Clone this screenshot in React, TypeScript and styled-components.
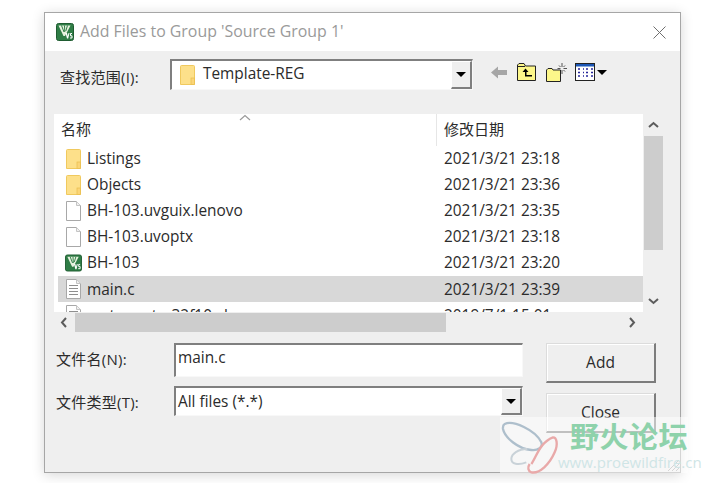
import styled, { createGlobalStyle } from "styled-components"

const GlobalStyle = createGlobalStyle`
    html, body {
        margin: 0;
        padding: 0;
        background: #fff;
    }
    * {
        box-sizing: border-box;
    }
`
const Page = styled.div`
    position: relative;
    width: 711px;
    height: 483px;
    padding: 12px 0 0 44px;
    overflow: hidden;
    background: #fff;
    font-family: "Open Sans", "Noto Sans CJK SC", sans-serif;
    font-size: 15.4px;
    color: #2b2b2b;
`
const Dialog = styled.div`
    position: relative;
    width: 637px;
    height: 461px;
    display: flex;
    flex-direction: column;
    border: 1px solid #a6a6a6;
    box-shadow: 0 2px 12px rgba(0, 0, 0, 0.16);
`
const TitleBar = styled.div`
    height: 38px;
    flex: none;
    display: flex;
    align-items: center;
    gap: 6px;
    padding: 0 14px 0 11px;
    background: #fff;
`
const TitleText = styled.div`
    flex: 1;
    padding-bottom: 2px;
    color: #9a9a9a;
    font-size: 15.9px;
    white-space: nowrap;
`
const Body = styled.div`
    flex: 1;
    display: flex;
    flex-direction: column;
    padding: 8px 16px 0 9px;
    background: #efefef;
`
const LookRow = styled.div`
    height: 31px;
    display: flex;
    align-items: center;
`
const LookLabel = styled.div`
    width: 116px;
    padding: 3px 0 0 6px;
    font-size: 15px;
    letter-spacing: 0.25px;
    white-space: nowrap;
`
const Sunken = styled.div<{ $width: number; $height: number }>`
    width: ${({ $width }) => $width}px;
    height: ${({ $height }) => $height}px;
    display: flex;
    align-items: center;
    background: #fff;
    border-top: 2px solid #7f7f7f;
    border-left: 2px solid #7f7f7f;
    border-right: 1px solid #f8f8f8;
    border-bottom: 1px solid #f8f8f8;
`
const ComboText = styled.div<{ $indent: number; $lift?: number }>`
    flex: 1;
    padding-left: ${({ $indent }) => $indent}px;
    padding-bottom: ${({ $lift }) => $lift ?? 0}px;
    white-space: nowrap;
`
const DropButton = styled.div`
    width: 21px;
    align-self: stretch;
    display: flex;
    align-items: center;
    justify-content: center;
    background: #efefef;
    border-top: 1px solid #fff;
    border-left: 1px solid #fff;
    border-right: 2px solid #7f7f7f;
    border-bottom: 2px solid #7f7f7f;
`
const DownCaret = styled.div`
    width: 0;
    height: 0;
    border-left: 5px solid transparent;
    border-right: 5px solid transparent;
    border-top: 5px solid #000;
`
const Tools = styled.div`
    display: flex;
    align-items: center;
    gap: 10px;
    margin: 0 0 5px 18px;
`
const ViewTool = styled.div`
    display: flex;
    align-items: center;
    gap: 2px;
    margin-left: -2px;
`
const FileArea = styled.div`
    width: 610px;
    height: 218px;
    margin-top: 24px;
    display: grid;
    grid-template-columns: 589px 21px;
    grid-template-rows: 198px 20px;
`
const List = styled.div`
    position: relative;
    padding-left: 4px;
    overflow: hidden;
    background: #fff;
`
const SortMark = styled.svg`
    position: absolute;
    left: 185px;
    top: 0;
`
const HeaderRow = styled.div`
    height: 32px;
    display: grid;
    grid-template-columns: 378px 1fr;
    align-items: center;
`
const HeaderCell = styled.div<{ $divided?: boolean }>`
    height: 100%;
    display: flex;
    align-items: center;
    padding: 0 0 4px ${({ $divided }) => ($divided ? 7 : 3)}px;
    font-size: 15px;
    border-left: ${({ $divided }) => ($divided ? "1px solid #e6e6e6" : "none")};
`
const NameCell = styled.div`
    display: flex;
    align-items: center;
    gap: 5px;
    padding-left: 7px;
    white-space: nowrap;
`
const NameText = styled.div`
    padding-bottom: 2px;
`
const IconSlot = styled.div`
    width: 17px;
    height: 20px;
    display: flex;
    align-items: center;
    justify-content: center;
`
const DateCell = styled.div`
    padding: 0 0 2px 8px;
    white-space: nowrap;
`
const Row = styled.div<{ $selected?: boolean; $settled?: boolean }>`
    height: 26px;
    display: grid;
    grid-template-columns: 378px 1fr;
    align-items: center;
    background: ${({ $selected }) => ($selected ? "#d8d8d8" : "transparent")};

    ${NameText}, ${DateCell} {
        padding-bottom: ${({ $settled }) => ($settled ? 0 : 2)}px;
    }
`
const VScroll = styled.div`
    display: flex;
    flex-direction: column;
    align-items: center;
    background: #efefef;
`
const VArrow = styled.div`
    height: 22px;
    display: flex;
    align-items: center;
    justify-content: center;
`
const VThumb = styled.div`
    width: 19px;
    height: 114px;
    background: #cdcdcd;
`
const VTrack = styled.div`
    flex: 1;
`
const HScroll = styled.div`
    display: flex;
    align-items: center;
    background: #efefef;
`
const HArrow = styled.div`
    width: 21px;
    height: 100%;
    display: flex;
    align-items: center;
    justify-content: center;
`
const HThumb = styled.div`
    width: 371px;
    height: 19px;
    background: #cdcdcd;
`
const HTrack = styled.div`
    flex: 1;
`
const Form = styled.div`
    margin-top: 11px;
    display: grid;
    grid-template-columns: 469px 110px;
    column-gap: 23px;
`
const Fields = styled.div`
    display: flex;
    flex-direction: column;
    gap: 9px;
    padding-left: 2px;
`
const Field = styled.div`
    display: flex;
    align-items: center;
`
const FieldLabel = styled.div<{ $lift?: number }>`
    width: 118px;
    padding-bottom: ${({ $lift }) => $lift ?? 0}px;
    font-size: 15px;
    letter-spacing: 0.25px;
    white-space: nowrap;
`
const Buttons = styled.div`
    display: flex;
    flex-direction: column;
    gap: 10px;
`
const PushButton = styled.div`
    height: 40px;
    display: flex;
    align-items: center;
    justify-content: center;
    padding-bottom: 1px;
    font-size: 15.5px;
    background: #efefef;
    border-top: 1px solid #dcdcdc;
    border-left: 1px solid #dcdcdc;
    border-right: 2px solid #7c7c7c;
    border-bottom: 2px solid #7c7c7c;
    box-shadow: inset 1px 1px 0 #fff;
`
const Grip = styled.svg`
    position: absolute;
    right: 0;
    bottom: 0;
`
const Watermark = styled.div`
    position: absolute;
    left: 500px;
    top: 417px;
    width: 188px;
    height: 56px;
    display: flex;
    background: rgba(255, 255, 255, 0.52);
`
const WatermarkLogo = styled.svg`
    flex: none;
    margin: -3px 0 0 -2px;
`
const WatermarkTitle = styled.div`
    padding-left: 2px;
    color: #8ed2ab;
    font-family: "Noto Sans CJK SC", sans-serif;
    font-size: 29px;
    font-weight: 700;
    line-height: 36px;
    letter-spacing: 0.5px;
    white-space: nowrap;
`
const WatermarkSite = styled.div`
    position: absolute;
    left: 58px;
    top: 35px;
    color: #cfe5e6;
    font-size: 15px;
    line-height: 20px;
    white-space: nowrap;
`

function KeilIcon() {
    return (
        <svg width="18" height="18" viewBox="0 0 18 18">
            <rect x="0.5" y="0.5" width="17" height="17" rx="2" fill="#2f7d46" stroke="#1f5c31" />
            <path d="M2.500 2.500 L14.500 2.500 L9 13 L7.500 13 Z" fill="#e8f2df" />
            <path d="M5.500 2.500 L8 9 M8.500 2.500 L8.800 9 M11.500 2.500 L9.800 8" stroke="#2f7d46" strokeWidth="1" fill="none" />
            <path d="M9.500 10 L11 10 L11.700 13 L12.500 10 L13.500 10 L12.200 15.500 L11 15.500 Z" fill="#fff" />
            <path d="M16 10.500 L14.500 10.500 L14.500 12.800 L16 12.800 L16 15 L14 15" fill="none" stroke="#fff" strokeWidth="1" />
        </svg>
    )
}

function FolderIcon() {
    return (
        <svg width="15" height="20" viewBox="0 0 15 20">
            <path d="M0.500 1.500 Q0.500 0.500 1.500 0.500 L13.500 0.500 Q14.500 0.500 14.500 1.500 L14.500 19.500 L0.500 19.500 Z" fill="#fde08a" stroke="#f0c95e" />
            <rect x="11" y="13" width="3.500" height="6.500" fill="#fbd577" stroke="#e8bd4e" strokeWidth="0.700" />
        </svg>
    )
}

function PageIcon({ lined }: { lined?: boolean }) {
    return (
        <svg width="15" height="20" viewBox="0 0 15 20">
            <path d="M0.500 0.500 L10.500 0.500 L14.500 4.500 L14.500 19.500 L0.500 19.500 Z" fill="#fff" stroke="#a8a8a8" />
            <path d="M10.500 0.500 L10.500 4.500 L14.500 4.500" fill="#f0f0f0" stroke="#c4c4c4" />
            {lined && <path d="M3 6.500 H12 M3 9.500 H12 M3 12.500 H12 M3 15.500 H12" stroke="#8f8f8f" />}
        </svg>
    )
}

function BackIcon() {
    return (
        <svg width="16" height="13" viewBox="0 0 16 13">
            <path d="M0 6.500 L7 0.500 L7 4 L16 4 L16 9 L7 9 L7 12.500 Z" fill="#a6a6a6" />
        </svg>
    )
}

function UpFolderIcon() {
    return (
        <svg width="19" height="18" viewBox="0 0 19 18">
            <path d="M0.500 17.500 L0.500 2 L2 0.500 L7 0.500 L8.500 3 L18.500 3 L18.500 17.500 Z" fill="#fdf78a" stroke="#222" />
            <path d="M1 3.500 L8 3.500" stroke="#222" fill="none" />
            <path d="M5.500 9 L8.500 5.500 L11.500 9 L9.500 9 L9.500 12 L15 12 L15 13.500 L8 13.500 L8 9 Z" fill="#000" />
        </svg>
    )
}

function NewFolderIcon() {
    return (
        <svg width="21" height="19" viewBox="0 0 21 19">
            <path d="M0.500 18.500 L0.500 7 L2 5.500 L6 5.500 L7 7 L14.500 7 L14.500 18.500 Z" fill="#fdf78a" stroke="#222" />
            <path d="M16 0 V4 M16 7 V11 M11.500 5.500 H14.500 M17.500 5.500 H21 M13 2.500 L14.500 4 M19 2.500 L17.500 4 M19 8.500 L17.500 7" stroke="#555" fill="none" />
        </svg>
    )
}

function ViewsIcon() {
    return (
        <svg width="20" height="18" viewBox="0 0 20 18">
            <rect x="0.500" y="0.500" width="19" height="17" fill="#fff" stroke="#222" />
            <rect x="1" y="1" width="18" height="2.500" fill="#1b56b5" />
            <path d="M3 6 H6 M8 6 H9 M11 6 H14 M16 6 H18 M3 9.500 H6 M8 9.500 H9 M11 9.500 H14 M16 9.500 H18 M3 13 H6 M8 13 H9 M11 13 H14 M16 13 H18" stroke="#26269a" strokeWidth="1.500" strokeDasharray="2 1" />
        </svg>
    )
}

function Chevron({ dir }: { dir: "up" | "down" | "left" | "right" }) {
    const points = {
        up: "1,7 5.500,3 10,7",
        down: "1,3 5.500,7 10,3",
        left: "7,1 3,5.500 7,10",
        right: "3,1 7,5.500 3,10",
    }
    return (
        <svg width="11" height="11" viewBox="0 0 11 11">
            <polyline points={points[dir]} fill="none" stroke="#5c5c5c" strokeWidth="2" />
        </svg>
    )
}

type FileKind = "folder" | "file" | "keil" | "source"

const files: { name: string; date: string; kind: FileKind; selected?: boolean; settled?: boolean }[] = [
    { name: "Listings", date: "2021/3/21 23:18", kind: "folder" },
    { name: "Objects", date: "2021/3/21 23:36", kind: "folder" },
    { name: "BH-103.uvguix.lenovo", date: "2021/3/21 23:35", kind: "file" },
    { name: "BH-103.uvoptx", date: "2021/3/21 23:18", kind: "file" },
    { name: "BH-103", date: "2021/3/21 23:20", kind: "keil" },
    { name: "main.c", date: "2021/3/21 23:39", kind: "source", selected: true, settled: true },
    { name: "system_stm32f10x.h", date: "2019/7/1 15:01", kind: "source", settled: true },
]

function FileIcon({ kind }: { kind: FileKind }) {
    if (kind === "folder") return <FolderIcon />
    if (kind === "keil") return <KeilIcon />
    return <PageIcon lined={kind === "source"} />
}

function App() {
    return (
        <Page>
            <GlobalStyle />
            <Dialog>
                <TitleBar>
                    <KeilIcon />
                    <TitleText>Add Files to Group 'Source Group 1'</TitleText>
                    <svg width="13" height="13" viewBox="0 0 13 13">
                        <path d="M0.500 0.500 L12.500 12.500 M12.500 0.500 L0.500 12.500" stroke="#6f6f6f" />
                    </svg>
                </TitleBar>
                <Body>
                    <LookRow>
                        <LookLabel>查找范围(I):</LookLabel>
                        <Sunken $width={303} $height={31}>
                            <ComboText $indent={8}>
                                <Field>
                                    <FolderIcon />
                                    <ComboText $indent={8} $lift={3}>Template-REG</ComboText>
                                </Field>
                            </ComboText>
                            <DropButton><DownCaret /></DropButton>
                        </Sunken>
                        <Tools>
                            <BackIcon />
                            <UpFolderIcon />
                            <NewFolderIcon />
                            <ViewTool>
                                <ViewsIcon />
                                <DownCaret />
                            </ViewTool>
                        </Tools>
                    </LookRow>
                    <FileArea>
                        <List>
                            <SortMark width="12" height="8" viewBox="0 0 12 8">
                                <polyline points="1,6 6,1.500 11,6" fill="none" stroke="#9a9a9a" strokeWidth="1.200" />
                            </SortMark>
                            <HeaderRow>
                                <HeaderCell>名称</HeaderCell>
                                <HeaderCell $divided>修改日期</HeaderCell>
                            </HeaderRow>
                            {files.map((file) => (
                                <Row key={file.name} $selected={file.selected} $settled={file.settled}>
                                    <NameCell>
                                        <IconSlot><FileIcon kind={file.kind} /></IconSlot>
                                        <NameText>{file.name}</NameText>
                                    </NameCell>
                                    <DateCell>{file.date}</DateCell>
                                </Row>
                            ))}
                        </List>
                        <VScroll>
                            <VArrow><Chevron dir="up" /></VArrow>
                            <VThumb />
                            <VTrack />
                            <VArrow><Chevron dir="down" /></VArrow>
                        </VScroll>
                        <HScroll>
                            <HArrow><Chevron dir="left" /></HArrow>
                            <HThumb />
                            <HTrack />
                            <HArrow><Chevron dir="right" /></HArrow>
                        </HScroll>
                    </FileArea>
                    <Form>
                        <Fields>
                            <Field>
                                <FieldLabel $lift={4}>文件名(N):</FieldLabel>
                                <Sunken $width={349} $height={34}>
                                    <ComboText $indent={2} $lift={6}>main.c</ComboText>
                                </Sunken>
                            </Field>
                            <Field>
                                <FieldLabel>文件类型(T):</FieldLabel>
                                <Sunken $width={349} $height={30}>
                                    <ComboText $indent={2}>All files (*.*)</ComboText>
                                    <DropButton><DownCaret /></DropButton>
                                </Sunken>
                            </Field>
                        </Fields>
                        <Buttons>
                            <PushButton>Add</PushButton>
                            <PushButton>Close</PushButton>
                        </Buttons>
                    </Form>
                </Body>
                <Grip width="14" height="14" viewBox="0 0 14 14">
                    <path d="M13 2 L2 13 M13 6 L6 13 M13 10 L10 13" stroke="#a8a8a8" />
                </Grip>
            </Dialog>
            <Watermark>
                <WatermarkLogo width="70" height="64" viewBox="0 0 210 192">
                    <path d="M20 30 C45 18 112 48 130 85 C136 100 120 110 100 108 C60 105 20 70 15 45 C14 36 16 32 20 30 Z" fill="none" stroke="#aebfcc" strokeWidth="7" />
                    <path d="M100 150 C115 130 125 85 165 70 C176 70 181 90 170 115 C155 150 125 180 100 175 C90 172 88 160 95 150" fill="none" stroke="#e9a9a9" strokeWidth="7" />
                    <path d="M88 105 C60 105 40 120 40 135 C40 150 60 155 85 145" fill="none" stroke="#c9d2d8" strokeWidth="6" />
                </WatermarkLogo>
                <WatermarkTitle>野火论坛</WatermarkTitle>
                <WatermarkSite>www.proewildfire.cn</WatermarkSite>
            </Watermark>
        </Page>
    )
}

export default App
